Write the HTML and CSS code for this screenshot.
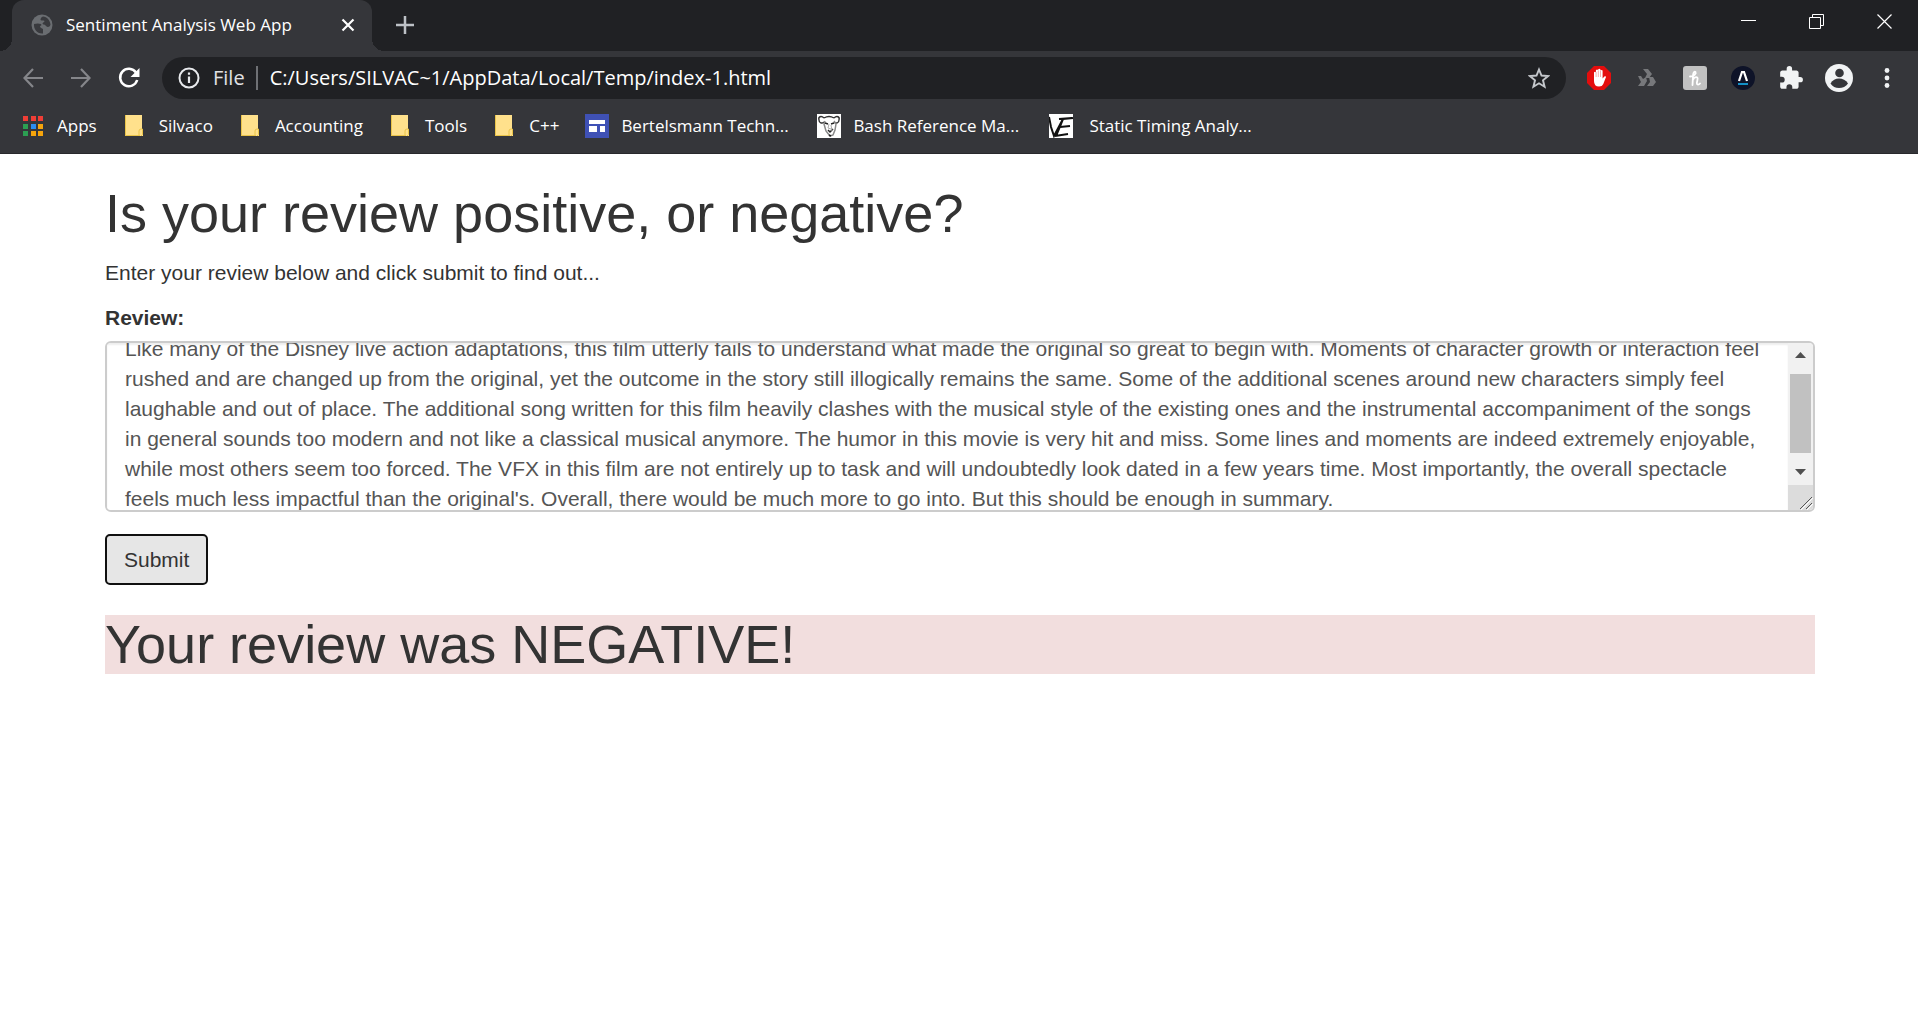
FILE: index.html
```html
<!DOCTYPE html>
<html lang="en">
<head>
<meta charset="utf-8">
<title>Sentiment Analysis Web App</title>
<link rel="stylesheet" href="styles.css">
</head>
<body>
<header class="browser">
  <div class="tab-strip">
    <div class="tab">
      <svg class="globe" width="22" height="22" viewBox="0 0 22 22"><circle cx="11" cy="11" r="10.500" fill="#6a6d71"/><path d="M3 10q4-1 7 0c1 1 0 2-1 2 0 2 2 2 3 3v4.500C6 20 2.500 15 3 10zM12 2.500c4 0 7 4 7.500 8-1 3-3 3-4.500 1.500-1-2-3-1-3.500-2.500.5-1.500 2-1 2-2.500-1-1-3 0-4-1 0-2 1-3 2.500-3.500z" fill="#393a3e"/></svg>
      <span class="tab-title">Sentiment Analysis Web App</span>
      <button class="tab-close" aria-label="Close tab"><svg width="14" height="14" viewBox="0 0 14 14"><path d="M1.500 1.500l11 11M12.500 1.500l-11 11" stroke="#fff" stroke-width="2.200"/></svg></button>
    </div>
    <button class="new-tab" aria-label="New tab"><svg width="18" height="18" viewBox="0 0 18 18"><path d="M9 0v18M0 9h18" stroke="#bdc1c6" stroke-width="2.500"/></svg></button>
    <div class="window-controls">
      <button aria-label="Minimize"><svg width="15" height="15" viewBox="0 0 15 15"><path d="M0 6.500h15" stroke="#fff"/></svg></button>
      <button aria-label="Restore"><svg width="15" height="15" viewBox="0 0 15 15"><path d="M.5 3.500h11v11H.5zM3.500 3.500v-3h11v11h-3" fill="none" stroke="#fff"/></svg></button>
      <button aria-label="Close"><svg width="15" height="15" viewBox="0 0 15 15"><path d="M.5.5l14 14M14.500.5l-14 14" stroke="#fff" stroke-width="1.200"/></svg></button>
    </div>
  </div>
  <div class="toolbar">
    <div class="tools">
      <button aria-label="Back"><svg width="20" height="20" viewBox="0 0 20 20"><path d="M20 10H1.500M10 1L1.500 10l8.500 9" fill="none" stroke="#85868a" stroke-width="2.200"/></svg></button>
      <button aria-label="Forward"><svg width="20" height="20" viewBox="0 0 20 20"><path d="M0 10h18.500M10 1l8.500 9-8.500 9" fill="none" stroke="#85868a" stroke-width="2.200"/></svg></button>
      <button aria-label="Reload"><svg width="22" height="22" viewBox="0 0 22 22"><path d="M18 5.500A8.700 8.700 0 1 0 19.200 13" fill="none" stroke="#fff" stroke-width="2.500"/><path d="M21.500 1v9h-9z" fill="#fff"/></svg></button>
    </div>
    <div class="omnibox">
      <svg width="22" height="22" viewBox="0 0 22 22"><circle cx="11" cy="11" r="9.500" fill="none" stroke="#e8eaed" stroke-width="2"/><path d="M11 9.500v6.500M11 5.500v2.200" stroke="#e8eaed" stroke-width="2.200"/></svg>
      <span class="scheme">File</span>
      <input class="address" aria-label="Address" value="C:/Users/SILVAC~1/AppData/Local/Temp/index-1.html">
      <button aria-label="Bookmark this page"><svg width="22" height="22" viewBox="0 0 22 22"><path d="M11 2.500l2.500 6 6.500.6-5 4.200 1.600 6.400L11 16.300l-5.600 3.400L7 13.300 2 9.100l6.500-.6z" fill="none" stroke="#c4c7cb" stroke-width="1.900"/></svg></button>
    </div>
    <div class="tools">
      <button aria-label="AdBlock"><svg width="24" height="24" viewBox="0 0 24 24"><path d="M7 0h10l7 7v10l-7 7H7l-7-7V7z" fill="#e40d0d"/><path d="M7 12.500V6.300q1-1.300 1.900 0V4.200q1.200-1.400 2.300 0V3.300q1.100-1.100 2.200 0v1.300q1.100-1.300 2.200 0v8l1.700-2.100q1.200-.8 1.800.2L16.300 18q-1 2.500-4.300 2.500Q7 20.500 7 15z" fill="#fff"/><path d="M9.100 6v5M11.300 4.500V11M13.500 5v6" stroke="#e85b5b" stroke-width=".5"/></svg></button>
      <button aria-label="Extension"><svg width="18" height="18" viewBox="0 0 18 18"><path d="M5 0h5l4 5-3 4H7l2-4zM0 7h3l2 3 3-2 1 4-3 5H0l3-4zM11 8h4l3 5-3 4H9l3-4z" fill="#77787b"/></svg></button>
      <button aria-label="Honey"><svg width="24" height="24" viewBox="0 0 24 24"><rect width="24" height="24" rx="3" fill="#c1c1c1"/><path d="M7 10.500c4 0 6.500-3 5.500-4.500C11 4.500 10 8 10 10l-.5 9M9.800 14c2-4 5.500-3.500 4.700-.5l-.7 3.500c0 2 2 2 3.200.5" fill="none" stroke="#fff" stroke-width="1.800" stroke-linecap="round"/></svg></button>
      <button aria-label="Lambda"><svg width="24" height="24" viewBox="0 0 24 24"><circle cx="12" cy="12" r="12" fill="#0e1328"/><path d="M8 15L11 6h2l3 9" fill="none" stroke="#fff" stroke-width="2.200"/><path d="M7 18h10" stroke="#138fc6" stroke-width="2"/></svg></button>
      <button aria-label="Extensions"><svg width="26" height="26" viewBox="0 0 24 24"><path d="M20.500 11H19V7c0-1.100-.9-2-2-2h-4V3.500a2.500 2.500 0 0 0-5 0V5H4c-1.100 0-2 .9-2 2v3.800h1.500a2.700 2.700 0 0 1 0 5.400H2V20c0 1.100.9 2 2 2h3.800v-1.500a2.700 2.700 0 0 1 5.400 0V22H17c1.100 0 2-.9 2-2v-4h1.500a2.500 2.500 0 0 0 0-5z" fill="#f1f3f4"/></svg></button>
      <button aria-label="Profile"><svg width="28" height="28" viewBox="0 0 28 28"><circle cx="14" cy="14" r="14" fill="#f1f3f4"/><circle cx="14.500" cy="9" r="4.300" fill="#35363a"/><path d="M5.500 19.500c2-3.500 5-5 8.500-5s7 1.500 9 5c-2 3-5.500 4.500-9 4.500s-6.500-1.500-8.500-4.500z" fill="#35363a"/></svg></button>
      <button aria-label="Menu"><svg width="6" height="20" viewBox="0 0 6 20"><g fill="#f1f3f4"><circle cx="3" cy="2.500" r="2.400"/><circle cx="3" cy="10" r="2.400"/><circle cx="3" cy="17.500" r="2.400"/></g></svg></button>
    </div>
  </div>
  <nav class="bookmarks" aria-label="Bookmarks">
    <a href="#"><svg width="24" height="24" viewBox="0 0 24 24"><path d="M2 2h5v5H2zM10 2h5v5h-5zM17 2h5v5h-5z" fill="#ef3e36"/><path d="M2 10h5v5H2zM2 17h5v5H2z" fill="#2c9f52"/><path d="M10 10h5v5h-5z" fill="#2a8cf0"/><path d="M17 10h5v5h-5zM10 17h5v5h-5zM17 17h5v5h-5z" fill="#f5a40c"/></svg><span>Apps</span></a>
    <a href="#"><svg width="24" height="24" viewBox="0 0 24 24"><path d="M2 1h17v14h1v7H2z" fill="#ffe18c"/><path d="M16 22v-5q0-2 2-2h1.500v5.500L18 22M2.500 1v21M2 21.500h15" fill="none" stroke="#eac449"/></svg><span>Silvaco</span></a>
    <a href="#"><svg width="24" height="24" viewBox="0 0 24 24"><path d="M2 1h17v14h1v7H2z" fill="#ffe18c"/><path d="M16 22v-5q0-2 2-2h1.500v5.500L18 22M2.500 1v21M2 21.500h15" fill="none" stroke="#eac449"/></svg><span>Accounting</span></a>
    <a href="#"><svg width="24" height="24" viewBox="0 0 24 24"><path d="M2 1h17v14h1v7H2z" fill="#ffe18c"/><path d="M16 22v-5q0-2 2-2h1.500v5.500L18 22M2.500 1v21M2 21.500h15" fill="none" stroke="#eac449"/></svg><span>Tools</span></a>
    <a href="#"><svg width="24" height="24" viewBox="0 0 24 24"><path d="M2 1h17v14h1v7H2z" fill="#ffe18c"/><path d="M16 22v-5q0-2 2-2h1.500v5.500L18 22M2.500 1v21M2 21.500h15" fill="none" stroke="#eac449"/></svg><span>C++</span></a>
    <a href="#"><svg width="24" height="24" viewBox="0 0 24 24"><path d="M0 0h24v24H0z" fill="#3f51b5"/><path d="M4 6h16v4H4zM4 12h8v6H4zM15 12h5v6h-5z" fill="#fff"/></svg><span class="long">Bertelsmann Techn...</span></a>
    <a href="#"><svg width="24" height="24" viewBox="0 0 24 24"><path d="M0 0h24v24H0z" fill="#fff"/><path d="M7 4C4 1 1 3 2 6c0 3 3 4 5 2M17 4c3-3 6-1 5 2 0 3-3 4-5 2M7 4q5-3 10 0" fill="none" stroke="#333" stroke-width="1.400"/><path d="M8 7l-1 3 2 7 4 5 3-1 2-5 1-6-2-3" fill="none" stroke="#888" stroke-width="1.500"/><path d="M8 9l3 1M14 10l3-1M11 16l2 2 3-3M12 21l2 1" stroke="#222" fill="none" stroke-width="1.500"/><path d="M12 10l-1 4 3 1M14 11l1 6" fill="none" stroke="#aaa"/></svg><span class="long">Bash Reference Ma...</span></a>
    <a href="#"><svg width="28" height="24" viewBox="0 0 28 24"><path d="M0 0h24v24H0z" fill="#fff"/><path d="M0 3l2 10 3 9L14 5l10-1M10 5L23 4M11 13l10-1M6 22l13-2M14 5L7 22" fill="none" stroke="#111" stroke-width="2"/></svg><span class="long">Static Timing Analy...</span></a>
  </nav>
</header>
<main class="container">
  <h1>Is your review positive, or negative?</h1>
  <p>Enter your review below and click submit to find out...</p>
  <form>
    <label for="review">Review:</label>
    <div class="field">
      <textarea id="review">Like many of the Disney live action adaptations, this film utterly fails to understand what made the original so great to begin with. Moments of character growth or interaction feel rushed and are changed up from the original, yet the outcome in the story still illogically remains the same. Some of the additional scenes around new characters simply feel laughable and out of place. The additional song written for this film heavily clashes with the musical style of the existing ones and the instrumental accompaniment of the songs in general sounds too modern and not like a classical musical anymore. The humor in this movie is very hit and miss. Some lines and moments are indeed extremely enjoyable, while most others seem too forced. The VFX in this film are not entirely up to task and will undoubtedly look dated in a few years time. Most importantly, the overall spectacle feels much less impactful than the original's. Overall, there would be much more to go into. But this should be enough in summary.</textarea>
      <div class="scrollbar" aria-hidden="true">
        <svg width="25" height="31" viewBox="0 0 25 31"><path d="M7 15l5.500-6 5.500 6z" fill="#505050"/></svg>
        <div class="thumb"></div>
        <svg width="25" height="32" viewBox="0 0 25 32"><path d="M7 16h11l-5.500 6z" fill="#505050"/></svg>
        <svg class="grip" width="25" height="25" viewBox="0 0 25 25"><path d="M12 24l12-12M18 24l6-6" stroke="#555"/><path d="M13 25l12-12M19 25l6-6" stroke="#fff"/></svg>
      </div>
    </div>
    <button class="submit" type="button">Submit</button>
  </form>
  <h1 class="result">Your review was NEGATIVE!</h1>
</main>
<script src="script.js"></script>
</body>
</html>
```
FILE: styles.css
```css
* { box-sizing: border-box; }
body {
  margin: 0;
  background: #fff;
  color: #333;
  font: 21px/30px "Liberation Sans", Arial, sans-serif;
}
button { border: 0; background: none; padding: 0; font: inherit; color: inherit; }
svg { display: block; flex: none; }

.browser {
  background: #35363a;
  border-bottom: 1px solid #28292c;
  color: #fff;
  font: 17px/24px "Open Sans", "Noto Sans", sans-serif;
}
.browser button { display: flex; align-items: center; justify-content: center; }
.tab-strip { display: flex; height: 51px; padding-left: 12px; background: #202124; }
.tab {
  position: relative;
  display: flex;
  align-items: center;
  width: 360px;
  padding: 0 16px 2px 19px;
  border-radius: 12px 12px 0 0;
  background: #35363a;
}
.tab::before, .tab::after {
  content: "";
  position: absolute;
  bottom: 0;
  width: 12px;
  height: 12px;
}
.tab::before { right: 100%; background: radial-gradient(circle at 0 0, #202124 12px, #35363a 12px); }
.tab::after { left: 100%; background: radial-gradient(circle at 100% 0, #202124 12px, #35363a 12px); }
.tab-title { flex: 1; margin-left: 13px; white-space: nowrap; }
.tab-close { width: 16px; }
.new-tab { width: 66px; padding-bottom: 1px; }
.window-controls { display: flex; margin-left: auto; height: 43px; }
.window-controls button { width: 68px; }

.toolbar { display: flex; align-items: center; height: 54px; padding: 0 7px 0 9px; }
.tools { display: flex; }
.tools button { width: 48px; height: 42px; }
.omnibox {
  flex: 1;
  display: flex;
  align-items: center;
  height: 42px;
  margin: 0 9px;
  padding: 0 16px;
  border-radius: 21px;
  background: #202124;
  font-size: 20px;
}
.scheme {
  margin: 0 12px 0 13px;
  padding-right: 11px;
  border-right: 2px solid #6f7175;
  color: #e0e2e5;
}
.address { flex: 1; min-width: 0; border: 0; padding: 0; background: none; color: #fff; font: inherit; outline: 0; }

.bookmarks { display: flex; gap: 26px; height: 48px; padding: 0 21px 6px; }
.bookmarks a { display: flex; align-items: center; gap: 12px; color: #fff; text-decoration: none; white-space: nowrap; }
.long { min-width: 170px; }

.container { max-width: 1920px; margin: 0 auto; padding: 30px 103px 30px 105px; }
h1 { margin: 0 0 15px; font-size: 54px; line-height: 59px; font-weight: 400; }
p { margin: 0 0 15px; }
label { display: block; margin-bottom: 8px; font-weight: 700; }
.field {
  display: flex;
  height: 171px;
  margin-bottom: 22px;
  border: 2px solid #ccc;
  border-radius: 6px;
  overflow: hidden;
}
textarea {
  flex: 1;
  min-width: 0;
  border: 0;
  outline: 0;
  padding: 9px 18px;
  resize: none;
  scrollbar-width: none;
  color: #555;
  font: inherit;
  box-shadow: inset 0 2px 2px rgba(0, 0, 0, .07);
}
.scrollbar { display: flex; flex-direction: column; width: 25px; background: #f1f1f1; }
.thumb { flex: 1; margin: 0 2px; background: #c1c1c1; }
.grip { background: #dcdcdc; }
.submit {
  display: block;
  height: 51px;
  padding: 0 17px;
  border: 2px solid #101010;
  border-radius: 5px;
  background: #e6e6e6;
}
.result { margin-top: 30px; background: #f2dede; }
```
FILE: script.js
```js
// Show the review scrolled down from its first line.
document.getElementById("review").scrollTop = 18;
```
